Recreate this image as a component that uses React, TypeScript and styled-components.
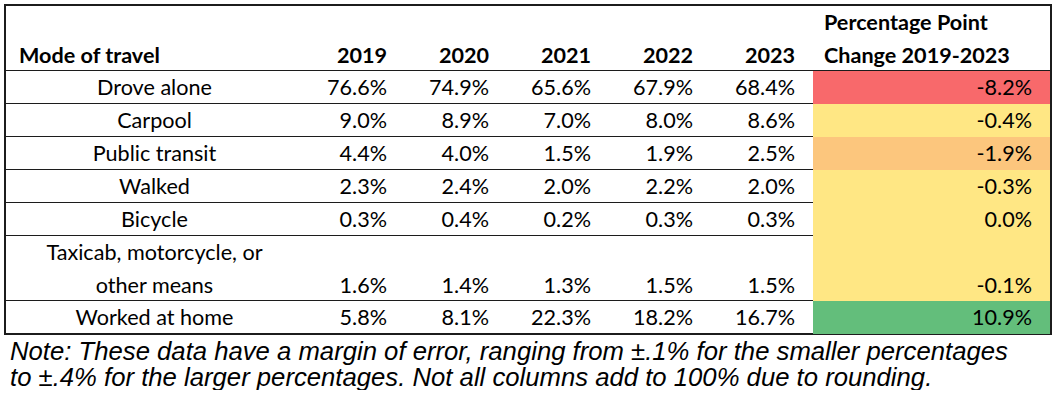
import React from "react";
import styled, { createGlobalStyle } from "styled-components";

const Global = createGlobalStyle`
  html, body { margin: 0; padding: 0; background: #fff; }
  body { font-family: Lato, "Noto Sans", sans-serif; color: #000; }
`;

const Page = styled.div`
  padding: 4px 0 0 4px;
  width: 1048px;
`;

const Table = styled.div`
  box-sizing: border-box;
  width: 1048px;
  border: 2px solid #1c1c1c;
  font-family: Lato, "Noto Sans", sans-serif;
  font-size: 21.6px;
  line-height: 33px;
`;

const Row = styled.div<{ $h: number; $last?: boolean }>`
  box-sizing: border-box;
  display: grid;
  grid-template-columns: 297px repeat(5, 102px) 1fr;
  height: ${(p) => p.$h}px;
  border-bottom: ${(p) => (p.$last ? "none" : "1px solid #1c1c1c")};
`;

const HeadCell = styled.div<{ $align: "left" | "right" }>`
  display: flex;
  flex-direction: column;
  justify-content: flex-end;
  font-weight: 700;
  text-align: ${(p) => p.$align};
  padding: ${(p) => (p.$align === "left" ? "0 0 0 13px" : "0 18px 0 0")};
  white-space: nowrap;
`;

const ChangeHead = styled(HeadCell)`
  padding: 0 0 0 11px;
`;

const ModeCell = styled.div`
  display: flex;
  flex-direction: column;
  justify-content: flex-end;
  align-items: center;
  text-align: center;
  white-space: nowrap;
`;

const NumCell = styled.div<{ $bg?: string }>`
  display: flex;
  flex-direction: column;
  justify-content: flex-end;
  text-align: right;
  padding-right: 18px;
  background: ${(p) => p.$bg || "transparent"};
`;

const Note = styled.div`
  margin-top: 3px;
  padding-left: 6px;
  font-family: "Liberation Sans", Arial, sans-serif;
  font-style: italic;
  font-size: 25.7px;
  line-height: 26px;
  color: #000;
`;

const NoteLine = styled.div`
  white-space: nowrap;
`;

type RowData = {
  mode: string[];
  values: string[];
  change: string;
  color: string;
  h: number;
};

const RED = "#F8696B";
const YELLOW = "#FFE784";
const ORANGE = "#FCC67D";
const GREEN = "#63BE7B";

const rows: RowData[] = [
  { mode: ["Drove alone"], values: ["76.6%", "74.9%", "65.6%", "67.9%", "68.4%"], change: "-8.2%", color: RED, h: 33 },
  { mode: ["Carpool"], values: ["9.0%", "8.9%", "7.0%", "8.0%", "8.6%"], change: "-0.4%", color: YELLOW, h: 33 },
  { mode: ["Public transit"], values: ["4.4%", "4.0%", "1.5%", "1.9%", "2.5%"], change: "-1.9%", color: ORANGE, h: 33 },
  { mode: ["Walked"], values: ["2.3%", "2.4%", "2.0%", "2.2%", "2.0%"], change: "-0.3%", color: YELLOW, h: 33 },
  { mode: ["Bicycle"], values: ["0.3%", "0.4%", "0.2%", "0.3%", "0.3%"], change: "0.0%", color: YELLOW, h: 33 },
  { mode: ["Taxicab, motorcycle, or", "other means"], values: ["1.6%", "1.4%", "1.3%", "1.5%", "1.5%"], change: "-0.1%", color: YELLOW, h: 65 },
  { mode: ["Worked at home"], values: ["5.8%", "8.1%", "22.3%", "18.2%", "16.7%"], change: "10.9%", color: GREEN, h: 32 },
];

const years = ["2019", "2020", "2021", "2022", "2023"];

export default function App() {
  return (
    <Page>
      <Global />
      <Table>
        <Row $h={65}>
          <HeadCell $align="left">Mode of travel</HeadCell>
          {years.map((y) => (
            <HeadCell key={y} $align="right">
              {y}
            </HeadCell>
          ))}
          <ChangeHead $align="left">
            <div>Percentage Point</div>
            <div>Change 2019-2023</div>
          </ChangeHead>
        </Row>
        {rows.map((r, i) => (
          <Row key={r.mode[0]} $h={r.h} $last={i === rows.length - 1}>
            <ModeCell>
              {r.mode.map((m) => (
                <div key={m}>{m}</div>
              ))}
            </ModeCell>
            {r.values.map((v, j) => (
              <NumCell key={j}>{v}</NumCell>
            ))}
            <NumCell $bg={r.color}>{r.change}</NumCell>
          </Row>
        ))}
      </Table>
      <Note>
        <NoteLine>
          Note: These data have a margin of error, ranging from ±.1% for the smaller percentages
        </NoteLine>
        <NoteLine>to ±.4% for the larger percentages. Not all columns add to 100% due to rounding.</NoteLine>
      </Note>
    </Page>
  );
}
